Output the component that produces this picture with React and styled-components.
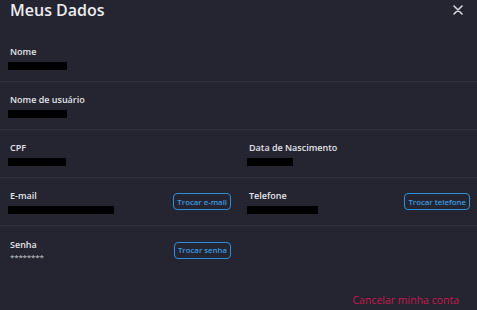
import React from 'react';
import styled, { createGlobalStyle } from 'styled-components';

const GlobalStyle = createGlobalStyle`
  html, body {
    margin: 0;
    padding: 0;
    background: #242530;
  }
  body {
    font-family: "Open Sans", "Noto Sans", sans-serif;
    color: #e4e4ea;
  }
`;

const Modal = styled.div`
  width: 477px;
  height: 310px;
  background: #242530;
  display: flex;
  flex-direction: column;
  overflow: hidden;
`;

const Header = styled.div`
  height: 34px;
  display: flex;
  justify-content: space-between;
  align-items: flex-start;
  padding: 0 10px 0 10px;
`;

const Title = styled.h1`
  margin: 0;
  font-size: 16px;
  line-height: 20px;
  font-weight: 600;
  color: #ececf0;
`;

const Close = styled.button`
  border: 0;
  background: none;
  padding: 0;
  margin-top: 3px;
  margin-right: 4px;
  width: 10px;
  height: 10px;
  color: #d8d8de;
  cursor: pointer;
`;

const Row = styled.div`
  height: 48px;
  display: grid;
  grid-template-columns: 221px 221px;
  column-gap: 18px;
  padding: 0 9px 0 10px;
  align-items: center;
  border-bottom: ${p => (p.$last ? 'none' : '1px solid #30313f')};
  box-sizing: border-box;
`;

const Field = styled.div`
  display: flex;
  align-items: center;
  justify-content: space-between;
`;

const Info = styled.div`
  display: flex;
  flex-direction: column;
`;

const Label = styled.div`
  font-size: 9px;
  line-height: 12px;
  font-weight: 600;
  color: #e4e4ea;
`;

const Hidden = styled.span`
  display: block;
  margin-top: 4px;
  margin-left: -2px;
  height: 8px;
  background: #000;
`;

const Stars = styled.span`
  display: block;
  margin-top: 1px;
  font-size: 8px;
  line-height: 10px;
  letter-spacing: -0.2px;
  color: #cfcfd6;
`;

const SwapButton = styled.button`
  height: 17px;
  padding: 0 3px;
  border: 1.5px solid #2b8fda;
  border-radius: 4px;
  background: transparent;
  color: #3b9be2;
  font-family: "Open Sans", sans-serif;
  font-size: 7.8px;
  font-weight: 600;
  cursor: pointer;
`;

const Footer = styled.div`
  flex: 1;
  display: flex;
  justify-content: flex-end;
  align-items: flex-end;
  padding: 0 18px 3px 0;
`;

const CancelLink = styled.a`
  font-size: 10.5px;
  line-height: 14px;
  color: #c8194f;
  cursor: pointer;
`;

const Value = ({ w }) => <Hidden style={{ width: w }} />;

export default function App() {
  return (
    <>
      <GlobalStyle />
      <Modal>
        <Header>
          <Title>Meus Dados</Title>
          <Close aria-label="Fechar">
            <svg width="10" height="10" viewBox="0 0 10 10">
              <path d="M1 1L9 9M9 1L1 9" stroke="currentColor" strokeWidth="1.6" strokeLinecap="round" />
            </svg>
          </Close>
        </Header>

        <Row>
          <Info>
            <Label>Nome</Label>
            <Value w={59} />
          </Info>
        </Row>

        <Row>
          <Info>
            <Label>Nome de usuário</Label>
            <Value w={59} />
          </Info>
        </Row>

        <Row>
          <Info>
            <Label>CPF</Label>
            <Value w={58} />
          </Info>
          <Info>
            <Label>Data de Nascimento</Label>
            <Value w={46} />
          </Info>
        </Row>

        <Row>
          <Field>
            <Info>
              <Label>E-mail</Label>
              <Value w={106} />
            </Info>
            <SwapButton>Trocar e-mail</SwapButton>
          </Field>
          <Field>
            <Info>
              <Label>Telefone</Label>
              <Value w={71} />
            </Info>
            <SwapButton>Trocar telefone</SwapButton>
          </Field>
        </Row>

        <Row $last>
          <Field>
            <Info>
              <Label>Senha</Label>
              <Stars>********</Stars>
            </Info>
            <SwapButton>Trocar senha</SwapButton>
          </Field>
        </Row>

        <Footer>
          <CancelLink>Cancelar minha conta</CancelLink>
        </Footer>
      </Modal>
    </>
  );
}
